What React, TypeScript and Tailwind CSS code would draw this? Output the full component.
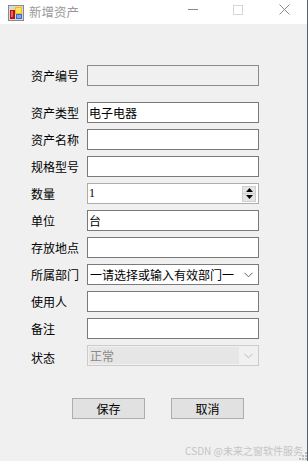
import { type ReactNode } from 'react';

const font = { fontFamily: '"Noto Sans CJK SC", "Microsoft YaHei", sans-serif' };

function Row({ label, children, labelClass = '' }: { label: string; children: ReactNode; labelClass?: string }) {
    return (
        <div className="flex items-center h-[21px]">
            <div className={`w-[56px] text-[12px] leading-[16px] text-black ${labelClass}`}>{label}</div>
            <div className="w-[172px] h-[21px]">{children}</div>
        </div>
    );
}

function TextBox({ value = '', disabled = false }: { value?: string; disabled?: boolean }) {
    return (
        <div
            className={`h-full w-full border px-[1px] text-[12px] leading-[19px] text-black ${
                disabled ? 'bg-[#f0f0f0] border-[#8c8c8c]' : 'bg-white border-[#7a7a7a]'
            }`}
        >
            {value}
        </div>
    );
}

function Chevron({ color }: { color: string }) {
    return (
        <svg width="9" height="6" viewBox="0 0 9 6" className="shrink-0">
            <path d="M0.5 0.8 L4.5 4.8 L8.5 0.8" fill="none" stroke={color} strokeWidth="1" />
        </svg>
    );
}

function Numeric({ value }: { value: string }) {
    return (
        <div className="h-full w-full bg-white border border-[#adadad] flex items-center pl-[1px] pr-[2px]">
            <span className="flex-1 text-[12px] leading-[19px] text-black" style={{ fontFamily: '"Liberation Serif", serif' }}>
                {value}
            </span>
            <div className="flex flex-col w-[14px] h-[16px]">
                <div className="flex-1 bg-[#e5e5e5] border border-[#cfcfcf] flex items-center justify-center">
                    <svg width="7" height="4" viewBox="0 0 7 4"><path d="M3.5 0 L7 4 L0 4 Z" fill="#000" /></svg>
                </div>
                <div className="flex-1 bg-[#e5e5e5] border border-t-0 border-[#cfcfcf] flex items-center justify-center">
                    <svg width="7" height="4" viewBox="0 0 7 4"><path d="M0 0 L7 0 L3.5 4 Z" fill="#000" /></svg>
                </div>
            </div>
        </div>
    );
}

function WinIcon() {
    return (
        <svg width="16" height="16" viewBox="0 0 16 16">
            <rect x="0.5" y="0.5" width="15" height="15" fill="#d8d8d8" stroke="#8a8a8a" />
            <rect x="2" y="5" width="5" height="9" fill="#b01818" />
            <rect x="3" y="6" width="2" height="6" fill="#f06060" />
            <rect x="7" y="2" width="7" height="7" fill="#f2c200" />
            <rect x="8" y="3" width="5" height="5" fill="#ffe060" />
            <rect x="8" y="9" width="6" height="5" fill="#3a6fd0" />
            <rect x="9" y="10" width="4" height="3" fill="#7fa8f0" />
        </svg>
    );
}

export default function App() {
    return (
        <div className="w-[308px] h-[461px] flex overflow-hidden" style={font}>
            <div className="w-[307px] h-full flex flex-col bg-[#f0f0f0] relative">
                {/* Title bar */}
                <div className="h-[24px] bg-white flex items-center shrink-0">
                    <div className="ml-[8px] mt-[1px]"><WinIcon /></div>
                    <span className="ml-[5px] text-[12.5px] leading-[16px] text-[#9a9a9a]">新增资产</span>
                    <div className="flex-1" />
                    <div className="w-[10px] h-px bg-[#8a8a8a] mb-[6px]" />
                    <div className="ml-[35px] mb-[5px] w-[10px] h-[10px] border border-[#d6d6d6]" />
                    <svg width="11" height="11" viewBox="0 0 11 11" className="ml-[36px] mr-[17px] mb-[5px]">
                        <path d="M0.5 0.5 L10.5 10.5 M10.5 0.5 L0.5 10.5" stroke="#8a8a8a" strokeWidth="1" />
                    </svg>
                </div>

                {/* Form */}
                <div className="flex flex-col pl-[31px] pt-[41px]">
                    <Row label="资产编号"><TextBox disabled /></Row>
                    <div className="flex flex-col gap-[6px] mt-[16px]">
                        <Row label="资产类型"><TextBox value="电子电器" /></Row>
                        <Row label="资产名称"><TextBox /></Row>
                        <Row label="规格型号"><TextBox /></Row>
                        <Row label="数量"><Numeric value="1" /></Row>
                        <Row label="单位"><TextBox value="台" /></Row>
                        <Row label="存放地点"><TextBox /></Row>
                        <Row label="所属部门">
                            <div className="h-full w-full bg-white border border-[#7a7a7a] flex items-center pl-[2px] pr-[5px]">
                                <span className="flex-1 overflow-hidden whitespace-nowrap text-[12px] leading-[19px] text-black">
                                    一请选择或输入有效部门一
                                </span>
                                <Chevron color="#606060" />
                            </div>
                        </Row>
                        <Row label="使用人"><TextBox /></Row>
                        <Row label="备注"><TextBox /></Row>
                        <Row label="状态" labelClass="mt-[5px]">
                            <div className="h-full w-full bg-[#f0f0f0] border border-[#cccccc] flex items-center pl-[1px] pr-[5px]">
                                <span className="w-[150px] h-[17px] bg-[#e6e6e6] text-[12px] leading-[17px] text-[#8a8a8a] pl-[1px]">正常</span>
                                <div className="flex-1" />
                                <Chevron color="#b8b8b8" />
                            </div>
                        </Row>
                    </div>

                    {/* Buttons */}
                    <div className="flex mt-[32px] pl-[41px] gap-[26px]">
                        <button className="w-[73px] h-[21px] bg-[#e1e1e1] border border-[#adadad] text-[12px] leading-[19px] text-black">
                            保存
                        </button>
                        <button className="w-[73px] h-[21px] bg-[#e1e1e1] border border-[#adadad] text-[12px] leading-[19px] text-black">
                            取消
                        </button>
                    </div>
                </div>

                {/* Watermark */}
                <div className="absolute right-[4px] bottom-[4px] text-[10px] leading-[13px] text-[#c4c4c4] whitespace-nowrap">
                    CSDN @未来之窗软件服务
                </div>
                <div className="absolute right-0 bottom-[1px] grid grid-cols-3 gap-[1px]">
                    <span />
                    <span />
                    <span className="w-[2px] h-[2px] bg-[#bdbdbd]" />
                    <span />
                    <span className="w-[2px] h-[2px] bg-[#bdbdbd]" />
                    <span className="w-[2px] h-[2px] bg-[#bdbdbd]" />
                    <span className="w-[2px] h-[2px] bg-[#bdbdbd]" />
                    <span className="w-[2px] h-[2px] bg-[#bdbdbd]" />
                    <span className="w-[2px] h-[2px] bg-[#bdbdbd]" />
                </div>
            </div>
            <div className="w-px h-full bg-[#5a6070]" />
        </div>
    );
}
